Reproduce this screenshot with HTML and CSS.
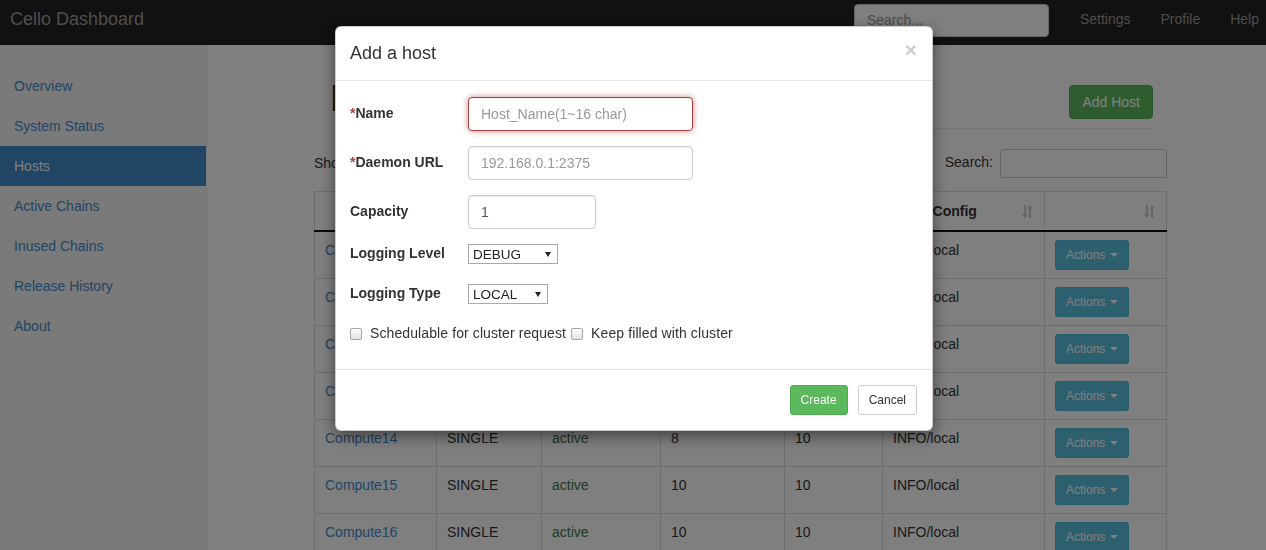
FILE: index.html
```html
<!DOCTYPE html>
<html lang="en">
<head>
    <meta charset="UTF-8">
    <meta name="viewport" content="width=device-width, initial-scale=1.0">
    <title>Cello Dashboard</title>
    <link rel="stylesheet" href="styles.css">
</head>
<body>
    <nav class="navbar">
        <a class="brand" href="#">Cello Dashboard</a>
        <div class="nav-right">
            <input class="nav-search" type="text" placeholder="Search...">
            <a href="#">Settings</a>
            <a href="#">Profile</a>
            <a href="#">Help</a>
        </div>
    </nav>

    <div class="layout">
        <ul class="sidebar">
            <li><a href="#">Overview</a></li>
            <li><a href="#">System Status</a></li>
            <li class="active"><a href="#">Hosts</a></li>
            <li><a href="#">Active Chains</a></li>
            <li><a href="#">Inused Chains</a></li>
            <li><a href="#">Release History</a></li>
            <li><a href="#">About</a></li>
        </ul>

        <div class="main">
            <div class="page-header">
                <h1>Hosts</h1>
                <button class="btn btn-success">Add Host</button>
            </div>

            <div class="table-tools">
                <label>Show <select class="len"><option>10</option></select> entries</label>
                <label class="search">Search: <input type="text"></label>
            </div>

            <table class="hosts">
                <colgroup>
                    <col style="width:122px"><col style="width:105px"><col style="width:119px">
                    <col style="width:124px"><col style="width:98px"><col style="width:162px"><col style="width:122px">
                </colgroup>
                <thead>
                    <tr>
                        <th>Name</th>
                        <th>Type</th>
                        <th>Status</th>
                        <th>Chains</th>
                        <th>Capacity</th>
                        <th>Log Config<svg class="sort" viewBox="0 0 12 13"><path d="M2 0h2v9h2l-3 4-3-4h2zM8 0l3 4H9v9H7V4H5z"/></svg></th>
                        <th><svg class="sort" viewBox="0 0 12 13"><path d="M2 0h2v9h2l-3 4-3-4h2zM8 0l3 4H9v9H7V4H5z"/></svg></th>
                    </tr>
                </thead>
                <tbody id="rows"></tbody>
            </table>
        </div>
    </div>

    <div class="backdrop"></div>

    <div class="modal">
        <div class="modal-header">
            <h4 class="modal-title">Add a host</h4>
            <button class="close" type="button">&times;</button>
        </div>
        <form class="modal-body">
            <div class="form-row has-error">
                <label class="control"><span class="req">*</span>Name</label>
                <input class="form-control wide" type="text" placeholder="Host_Name(1~16 char)">
            </div>
            <div class="form-row">
                <label class="control"><span class="req">*</span>Daemon URL</label>
                <input class="form-control wide" type="text" placeholder="192.168.0.1:2375">
            </div>
            <div class="form-row">
                <label class="control">Capacity</label>
                <input class="form-control short" type="text" value="1">
            </div>
            <div class="form-row small">
                <label class="control">Logging Level</label>
                <span class="select-wrap"><select class="level"><option>DEBUG</option><option>INFO</option></select></span>
            </div>
            <div class="form-row small">
                <label class="control">Logging Type</label>
                <span class="select-wrap"><select class="type"><option>LOCAL</option></select></span>
            </div>
            <div class="check-row">
                <label class="check"><input type="checkbox">Schedulable for cluster request</label>
                <label class="check"><input type="checkbox">Keep filled with cluster</label>
            </div>
        </form>
        <div class="modal-footer">
            <button class="btn btn-sm btn-success">Create</button>
            <button class="btn btn-sm btn-default">Cancel</button>
        </div>
    </div>

    <script>
        const hosts = [
            ['Compute10', 10], ['Compute11', 10], ['Compute12', 10], ['Compute13', 10],
            ['Compute14', 8], ['Compute15', 10], ['Compute16', 10]
        ];
        const tbody = document.getElementById('rows');
        hosts.forEach(function (h) {
            const tr = document.createElement('tr');
            tr.innerHTML =
                '<td><a href="#">' + h[0] + '</a></td>' +
                '<td>SINGLE</td>' +
                '<td class="ok">active</td>' +
                '<td>' + h[1] + '</td>' +
                '<td>10</td>' +
                '<td>INFO/local</td>' +
                '<td><button class="btn btn-sm btn-info">Actions <span class="caret"></span></button></td>';
            tbody.appendChild(tr);
        });
    </script>
</body>
</html>
```

FILE: styles.css
```css
body {
    margin: 0;
    font-family: "Liberation Sans", Arial, sans-serif;
    font-size: 14px;
    line-height: 1.42857;
    color: #333;
    background: #fff;
    overflow: hidden;
}
a {
    color: #428bca;
    text-decoration: none;
}

/* top bar */
.navbar {
    height: 45px;
    box-sizing: border-box;
    padding: 0 7px 5px 10px;
    background: #222;
    display: flex;
    align-items: center;
    justify-content: space-between;
}
.brand {
    color: #9d9d9d;
    font-size: 18px;
}
.nav-right {
    display: flex;
    align-items: center;
    gap: 30px;
}
.nav-right a {
    color: #9d9d9d;
}
.nav-search {
    width: 195px;
    height: 33px;
    box-sizing: border-box;
    margin-right: 1px;
    padding: 6px 12px;
    border: 1px solid #ccc;
    border-radius: 4px;
    font: inherit;
}
.nav-search::placeholder {
    color: #999;
}

/* page */
.layout {
    display: flex;
    height: calc(100vh - 45px);
}
.sidebar {
    width: 207px;
    flex: none;
    box-sizing: border-box;
    margin: 0;
    padding: 21px 0 0;
    list-style: none;
    background: #f5f5f5;
    border-right: 1px solid #eee;
}
.sidebar a {
    display: block;
    padding: 10px 14px;
    line-height: 20px;
}
.sidebar .active a {
    background: #428bca;
    color: #fff;
}
.main {
    flex: 1;
    padding: 0 100px 0 107px;
}
.page-header {
    margin: 34px 14px 0 16px;
    padding-bottom: 9px;
    border-bottom: 1px solid #eee;
    display: flex;
    justify-content: space-between;
    align-items: flex-end;
}
.page-header h1 {
    margin: 0;
    font-size: 36px;
    font-weight: normal;
    line-height: 1.1;
}
.table-tools {
    margin-top: 20px;
    height: 29px;
    display: flex;
    justify-content: space-between;
    align-items: center;
}
.table-tools .len {
    font-size: 12px;
    height: 29px;
}
.search {
    display: flex;
    align-items: center;
    gap: 7px;
}
.search input {
    width: 167px;
    height: 29px;
    box-sizing: border-box;
    border: 1px solid #ccc;
    border-radius: 3px;
}

/* buttons */
.btn {
    display: inline-block;
    font-family: inherit;
    font-size: 14px;
    line-height: 20px;
    padding: 6px 12px;
    border: 1px solid transparent;
    border-radius: 4px;
    cursor: pointer;
}
.btn-sm {
    padding: 5px 10px;
    font-size: 12px;
    line-height: 18px;
    border-radius: 3px;
}
.btn-success {
    color: #fff;
    background: #5cb85c;
    border-color: #4cae4c;
}
.btn-info {
    color: #fff;
    background: #5bc0de;
    border-color: #46b8da;
}
.btn-default {
    color: #333;
    background: #fff;
    border-color: #ccc;
}
.caret {
    display: inline-block;
    width: 0;
    height: 0;
    margin-left: 1px;
    vertical-align: middle;
    border-top: 4px solid;
    border-left: 4px solid transparent;
    border-right: 4px solid transparent;
}

/* hosts table */
.hosts {
    margin-top: 13px;
    width: 852px;
    table-layout: fixed;
    border-collapse: collapse;
}
.hosts th,
.hosts td {
    border: 1px solid #ddd;
    padding: 8px 10px;
    line-height: 20px;
    text-align: left;
    vertical-align: top;
    white-space: nowrap;
}
.hosts th {
    padding: 9px 10px 9px 20px;
    border-bottom: 2px solid #111;
}
.hosts th:first-child {
    color: #8a3a0e;
}
.hosts .sort {
    float: right;
    width: 12px;
    height: 13px;
    margin-top: 4px;
    fill: rgba(0, 0, 0, 0.2);
}
.hosts td.ok {
    color: #3c763d;
}

/* modal */
.backdrop {
    position: fixed;
    inset: 0;
    background: rgba(0, 0, 0, 0.5);
}
.modal {
    position: fixed;
    top: 26px;
    left: 335px;
    width: 598px;
    box-sizing: border-box;
    background: #fff;
    border: 1px solid rgba(0, 0, 0, 0.2);
    border-radius: 6px;
    box-shadow: 0 5px 15px rgba(0, 0, 0, 0.5);
}
.modal-header {
    padding: 14px 15px 15px 14px;
    border-bottom: 1px solid #e5e5e5;
    display: flex;
    justify-content: space-between;
    align-items: flex-start;
}
.modal-title {
    margin: 0;
    font-size: 18px;
    font-weight: normal;
    line-height: 24px;
}
.close {
    margin-top: -2px;
    padding: 0;
    border: 0;
    background: none;
    font-family: inherit;
    font-size: 21px;
    font-weight: bold;
    line-height: 1;
    color: #000;
    opacity: 0.2;
}
.modal-body {
    padding: 16px 15px 25px 14px;
}
.form-row {
    display: flex;
    align-items: center;
    margin-bottom: 15px;
}
.form-row.small {
    margin-bottom: 20px;
}
.control {
    width: 118px;
    flex: none;
    font-weight: bold;
}
.req {
    color: #a94442;
}
.form-control {
    height: 34px;
    box-sizing: border-box;
    padding: 6px 12px;
    font: inherit;
    color: #555;
    border: 1px solid #ccc;
    border-radius: 4px;
    box-shadow: inset 0 1px 1px rgba(0, 0, 0, 0.075);
}
.form-control::placeholder {
    color: #999;
}
.form-control.wide {
    width: 225px;
}
.form-control.short {
    width: 128px;
}
.has-error .form-control {
    border-color: #a94442;
    box-shadow: inset 0 1px 1px rgba(0, 0, 0, 0.075), 0 0 6px #ce8483;
}
.select-wrap {
    position: relative;
    display: inline-block;
    height: 20px;
}
.select-wrap select {
    appearance: none;
    -webkit-appearance: none;
    height: 20px;
    box-sizing: border-box;
    padding: 0 0 0 4px;
    border: 1px solid #a9a9a9;
    border-radius: 0;
    background: #fff;
    font-family: inherit;
    font-size: 13.5px;
    color: #222;
}
.select-wrap::after {
    content: "";
    position: absolute;
    right: 7px;
    top: 8px;
    border-top: 5px solid #222;
    border-left: 3px solid transparent;
    border-right: 3px solid transparent;
    pointer-events: none;
}
select.level {
    width: 90px;
}
select.type {
    width: 80px;
}
.check-row {
    display: flex;
    align-items: center;
    height: 20px;
    margin-top: 1px;
    gap: 5px;
}
.check {
    display: flex;
    align-items: center;
    letter-spacing: 0.1px;
}
.check input {
    appearance: none;
    -webkit-appearance: none;
    width: 12px;
    height: 12px;
    margin: 0 8px 0 0;
    border: 1px solid #a6a6a6;
    border-radius: 2px;
    background: linear-gradient(#fdfdfd, #e2e2e2);
}
.modal-footer {
    padding: 15px;
    border-top: 1px solid #e5e5e5;
    display: flex;
    justify-content: flex-end;
    gap: 10px;
}
```
